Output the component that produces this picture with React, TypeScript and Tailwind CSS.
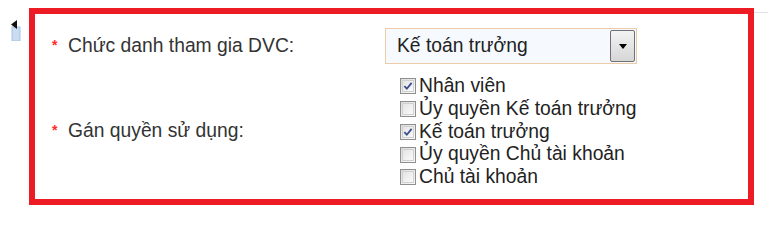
import React from 'react';

interface RoleOption {
  label: string;
  checked: boolean;
}

const roles: RoleOption[] = [
  { label: 'Nhân viên', checked: true },
  { label: 'Ủy quyền Kế toán trưởng', checked: false },
  { label: 'Kế toán trưởng', checked: true },
  { label: 'Ủy quyền Chủ tài khoản', checked: false },
  { label: 'Chủ tài khoản', checked: false },
];

const Checkbox = ({ checked }: { checked: boolean }) => (
  <span className="mr-[3px] flex h-[16px] w-[16px] shrink-0 items-center justify-center border border-[#8e8f8f] bg-gradient-to-br from-[#dcdcdc] to-[#fbfbfb]">
    <span className="flex h-[12px] w-[12px] items-center justify-center border border-[#d0d0d0] bg-gradient-to-br from-[#e4e4e4] to-[#fafafa]">
      {checked && (
        <svg width="11" height="10" viewBox="0 0 11 10">
          <path d="M1.5 5.2 L4.2 8 L9.5 1.5" fill="none" stroke="#3b4f8f" strokeWidth="2" />
        </svg>
      )}
    </span>
  </span>
);

const Label = ({ text }: { text: string }) => (
  <div className="flex items-center">
    <span className="flex items-start">
      <span className="mt-[6px] w-[16px] text-[14px] font-bold leading-none text-[#ff2a2a]">*</span>
      <span>{text}</span>
    </span>
  </div>
);

export default function App() {
  return (
    <div className="flex h-[225px] w-[768px] bg-white pl-[11px] font-['Liberation_Sans',Arial,sans-serif] text-[19.3px] text-[#333]">
      <svg className="mt-[20px] shrink-0" width="10" height="21" viewBox="0 0 10 21">
        <rect x="1" y="7" width="8" height="14" fill="#c9dcf2" stroke="#a9c1de" />
        <path d="M0 4.5 L6 0 L6 9 Z" fill="#111" />
      </svg>
      <div className="ml-[8px] mt-[8px] h-[197px] w-[725px] shrink-0 border-[6px] border-[#ed1c24] pl-[17px] pt-[14px]">
        <div className="grid grid-cols-[333px_252px] grid-rows-[36px_auto] gap-y-[11px]">
          <Label text="Chức danh tham gia DVC:" />
          <div className="flex h-[36px] items-center justify-between border border-[#eccba8] bg-[#f6faff] pl-[11px] pr-[1px] text-[#222]">
            <span>Kế toán trưởng</span>
            <span className="flex h-[32px] w-[25px] items-center justify-center rounded-[2px] border border-[#707070] bg-gradient-to-b from-[#f3f3f3] to-[#d6d6d6]">
              <svg width="8" height="5" viewBox="0 0 8 5">
                <path d="M0 0 L8 0 L4 5 Z" fill="#000" />
              </svg>
            </span>
          </div>
          <Label text="Gán quyền sử dụng:" />
          <div className="flex flex-col pl-[15px] leading-[22.75px] text-[#222]">
            {roles.map((role) => (
              <label key={role.label} className="flex items-center">
                <Checkbox checked={role.checked} />
                <span>{role.label}</span>
              </label>
            ))}
          </div>
        </div>
      </div>
      <div className="mt-[12px] h-0 flex-1 border-t border-[#dfe4ea]" />
    </div>
  );
}
